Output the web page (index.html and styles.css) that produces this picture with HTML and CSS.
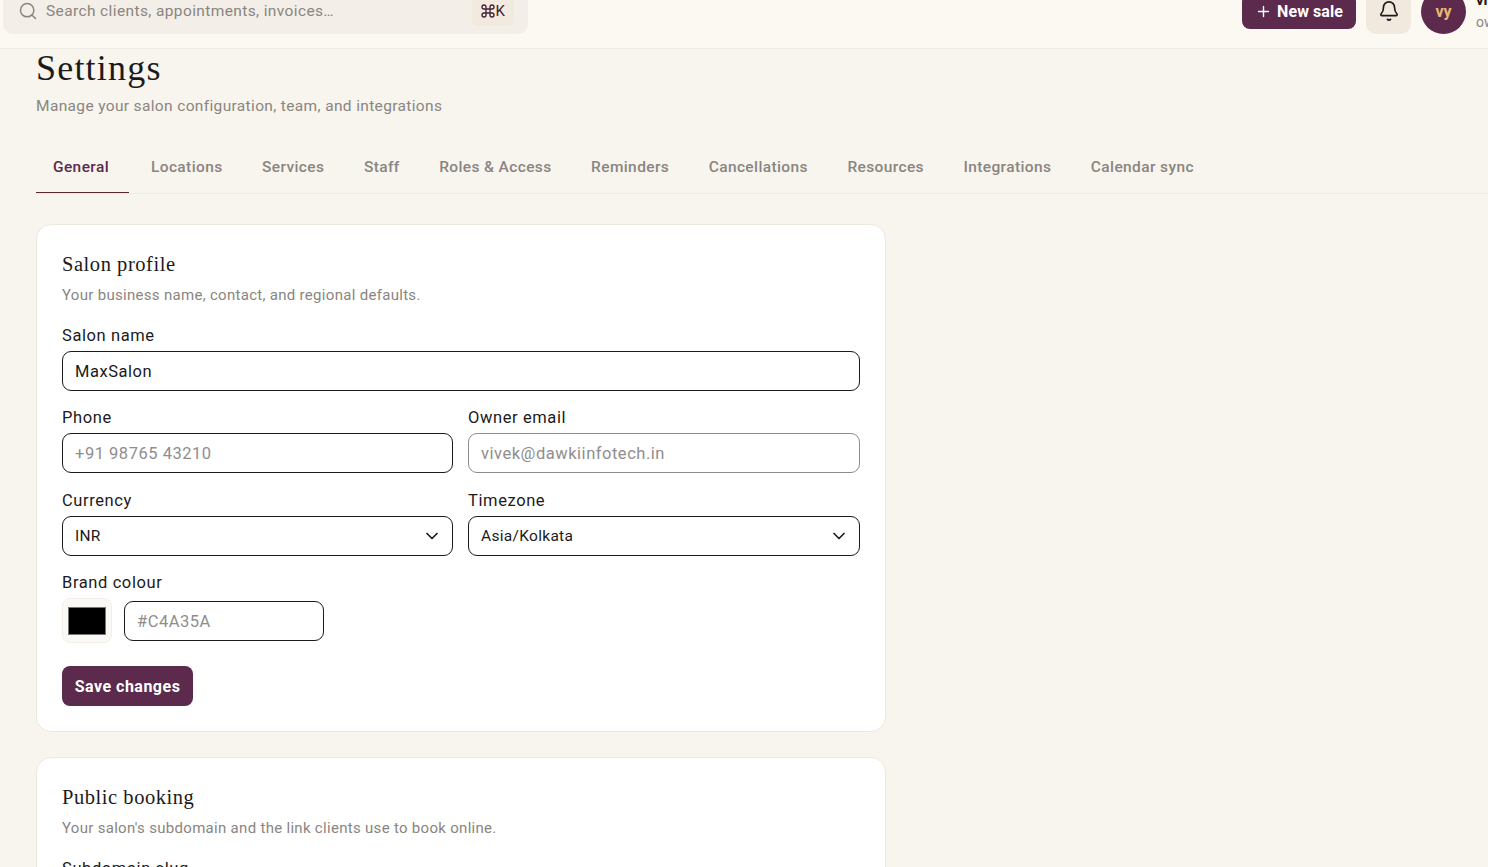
FILE: index.html
```
<!DOCTYPE html>
<html lang="en">
<head>
    <meta charset="UTF-8">
    <title>Settings</title>
    <link rel="stylesheet" href="styles.css">
</head>
<body>
    <header class="topbar">
        <div class="search">
            <svg class="search-icon" viewBox="0 0 24 24"><circle cx="11" cy="11" r="8"/><path d="m21 21-4.3-4.3"/></svg>
            <span class="search-text">Search clients, appointments, invoices…</span>
            <kbd class="shortcut"><svg viewBox="0 0 24 24"><path d="M15 6v12a3 3 0 1 0 3-3H6a3 3 0 1 0 3 3V6a3 3 0 1 0-3 3h12a3 3 0 1 0-3-3"/></svg>K</kbd>
        </div>
        <div class="topbar-actions">
            <button class="btn new-sale"><svg viewBox="0 0 24 24"><path d="M5 12h14M12 5v14"/></svg><span>New sale</span></button>
            <button class="bell"><svg viewBox="0 0 24 24"><path d="M6 8a6 6 0 0 1 12 0c0 4.5 1.4 6 2.7 7.3A1 1 0 0 1 20 17H4a1 1 0 0 1-.7-1.7C4.600 14 6 12.500 6 8"/><path d="M10.3 21a2 2 0 0 0 3.4 0"/></svg></button>
            <div class="avatar">vy</div>
            <div class="user">
                <span class="user-name">vivek</span>
                <span class="user-role">owner</span>
            </div>
        </div>
    </header>

    <main class="page">
        <h1>Settings</h1>
        <p class="subtitle">Manage your salon configuration, team, and integrations</p>

        <nav class="tabs">
            <a class="tab active">General</a>
            <a class="tab">Locations</a>
            <a class="tab">Services</a>
            <a class="tab">Staff</a>
            <a class="tab">Roles &amp; Access</a>
            <a class="tab">Reminders</a>
            <a class="tab">Cancellations</a>
            <a class="tab">Resources</a>
            <a class="tab">Integrations</a>
            <a class="tab">Calendar sync</a>
        </nav>

        <section class="card">
            <h2>Salon profile</h2>
            <p class="hint">Your business name, contact, and regional defaults.</p>
            <form class="form">
                <div class="field wide">
                    <label>Salon name</label>
                    <div class="input">MaxSalon</div>
                </div>
                <div class="field">
                    <label>Phone</label>
                    <div class="input placeholder">+91 98765 43210</div>
                </div>
                <div class="field">
                    <label>Owner email</label>
                    <div class="input disabled">vivek@dawkiinfotech.in</div>
                </div>
                <div class="field">
                    <label>Currency</label>
                    <div class="input select"><span>INR</span><svg viewBox="0 0 24 24"><path d="m6 9 6 6 6-6"/></svg></div>
                </div>
                <div class="field">
                    <label>Timezone</label>
                    <div class="input select"><span>Asia/Kolkata</span><svg viewBox="0 0 24 24"><path d="m6 9 6 6 6-6"/></svg></div>
                </div>
                <div class="field wide">
                    <label>Brand colour</label>
                    <div class="colour-row">
                        <div class="swatch"><div class="swatch-fill"></div></div>
                        <div class="input placeholder hex">#C4A35A</div>
                    </div>
                </div>
            </form>
            <button class="btn save" type="button">Save changes</button>
        </section>

        <section class="card">
            <h2>Public booking</h2>
            <p class="hint">Your salon's subdomain and the link clients use to book online.</p>
            <form class="form">
                <div class="field wide">
                    <label>Subdomain slug</label>
                </div>
            </form>
        </section>
    </main>
</body>
</html>
```
FILE: styles.css
```
* {
    box-sizing: border-box;
}

body {
    margin: 0;
    height: 867px;
    overflow: hidden;
    background-color: #f8f5ee;
    color: #1c1a1b;
    font-family: Roboto, "Liberation Sans", sans-serif;
    font-size: 16px;
}

h1, h2, p {
    margin: 0;
    font-weight: 400;
}

svg {
    fill: none;
    stroke: currentColor;
    stroke-width: 2;
    stroke-linecap: round;
    stroke-linejoin: round;
}

button {
    border: none;
    font-family: inherit;
}

/* Top bar, scrolled partly out of view */
.topbar {
    display: flex;
    align-items: center;
    justify-content: space-between;
    height: 74px;
    margin-top: -25px;
    padding-left: 3px;
    background-color: #fcf9f2;
    border-bottom: 1px solid #eeeae4;
}

.search {
    display: flex;
    align-items: center;
    width: 525px;
    height: 45px;
    padding: 0 14px 2px 15px;
    background-color: #f3eee7;
    border-radius: 10px;
    color: #8a8581;
}

.search-icon {
    width: 20px;
    height: 20px;
    margin-right: 8px;
    stroke-width: 1.8;
}

.search-text {
    font-size: 15.5px;
    letter-spacing: 0.38px;
}

.shortcut {
    display: flex;
    align-items: center;
    height: 31px;
    margin-left: auto;
    padding: 0 9px 0 8px;
    background-color: #f3eadf;
    border-radius: 6px;
    color: #43203a;
    font-family: inherit;
    font-size: 15px;
}

.shortcut svg {
    width: 16px;
    height: 16px;
}

.topbar-actions {
    display: flex;
    align-items: center;
    gap: 10px;
}

.btn {
    background-color: #5c2a4d;
    border-radius: 8px;
    color: #fff;
    font-size: 16px;
    font-weight: 700;
}

.new-sale {
    display: flex;
    align-items: center;
    gap: 5px;
    width: 114px;
    height: 35px;
    padding: 0 0 1px 13px;
    letter-spacing: 0.1px;
}

.new-sale svg {
    width: 17px;
    height: 17px;
}

.bell {
    display: flex;
    align-items: center;
    justify-content: center;
    width: 45px;
    height: 45px;
    padding: 0 0 2px;
    background-color: #f1e9de;
    border-radius: 10px;
    color: #1c1a1b;
}

.bell svg {
    width: 22px;
    height: 22px;
    stroke-width: 1.8;
}

.avatar {
    width: 45px;
    height: 45px;
    line-height: 45px;
    background-color: #5c2a4d;
    border-radius: 50%;
    color: #e8b972;
    font-size: 16px;
    font-weight: 700;
    text-align: center;
}

/* The user name runs past the right edge */
.user {
    display: flex;
    flex-direction: column;
    width: 12px;
    padding-bottom: 2px;
    line-height: 22px;
}

.user-name {
    font-size: 15px;
    font-weight: 700;
}

.user-role {
    color: #8a8581;
    font-size: 14px;
}

.page {
    padding-left: 36px;
}

h1 {
    font-family: "Liberation Serif", serif;
    font-size: 36px;
    line-height: 38px;
    letter-spacing: 1.2px;
}

.subtitle {
    margin-top: 7px;
    color: #8a8581;
    font-size: 15.5px;
    line-height: 24px;
    letter-spacing: 0.35px;
}

.tabs {
    display: flex;
    gap: 5px;
    height: 53px;
    margin: 23px 0 30px;
    border-bottom: 1px solid #eeeae4;
}

.tab {
    height: 52px;
    padding: 0 17.5px 0 17px;
    border-bottom: 1px solid transparent;
    color: #8a8581;
    font-size: 15.5px;
    font-weight: 500;
    line-height: 53px;
    letter-spacing: 0.38px;
}

.tab.active {
    padding-right: 20px;
    border-bottom-color: #5a2734;
    color: #5c2a4d;
}

.card {
    width: 850px;
    margin-bottom: 25px;
    padding: 25px;
    background-color: #fff;
    border: 1px solid #eee8de;
    border-radius: 15px;
}

h2 {
    font-family: "Liberation Serif", serif;
    font-size: 20.5px;
    line-height: 28px;
    letter-spacing: 0.55px;
}

.hint {
    margin: 4.6px 0 18.4px;
    color: #8a8581;
    font-size: 15px;
    line-height: 24px;
    letter-spacing: 0.3px;
}

.form {
    display: grid;
    grid-template-columns: 391px 392px;
    gap: 16.4px 15px;
}

.wide {
    grid-column: 1 / -1;
}

label {
    display: block;
    height: 26px;
    font-size: 16.5px;
    line-height: 22px;
    letter-spacing: 0.6px;
}

.input {
    height: 40px;
    padding: 0 12px;
    border: 1px solid #1c1a1b;
    border-radius: 9px;
    font-size: 16.5px;
    line-height: 39px;
    letter-spacing: 0.52px;
}

.placeholder {
    color: #8f8d8e;
}

.disabled {
    border-color: #8d8c8d;
    color: #8f8d8e;
}

.select {
    display: flex;
    align-items: center;
    justify-content: space-between;
    font-size: 15.5px;
    line-height: 40px;
    letter-spacing: 0.3px;
}

.select svg {
    width: 20px;
    height: 20px;
    margin-right: -2px;
}

.colour-row {
    display: flex;
    align-items: center;
    gap: 12px;
}

.swatch {
    width: 50px;
    height: 45px;
    padding: 8px 5px 7px;
    background-color: #fbf9f5;
    border: 1px solid #f3efe8;
    border-radius: 8px;
}

.swatch-fill {
    height: 28px;
    background-color: #000;
    border: 1px solid #777;
}

.hex {
    width: 200px;
}

.save {
    width: 131px;
    height: 40px;
    margin-top: 23px;
    padding: 0;
    letter-spacing: 0.5px;
}
```
